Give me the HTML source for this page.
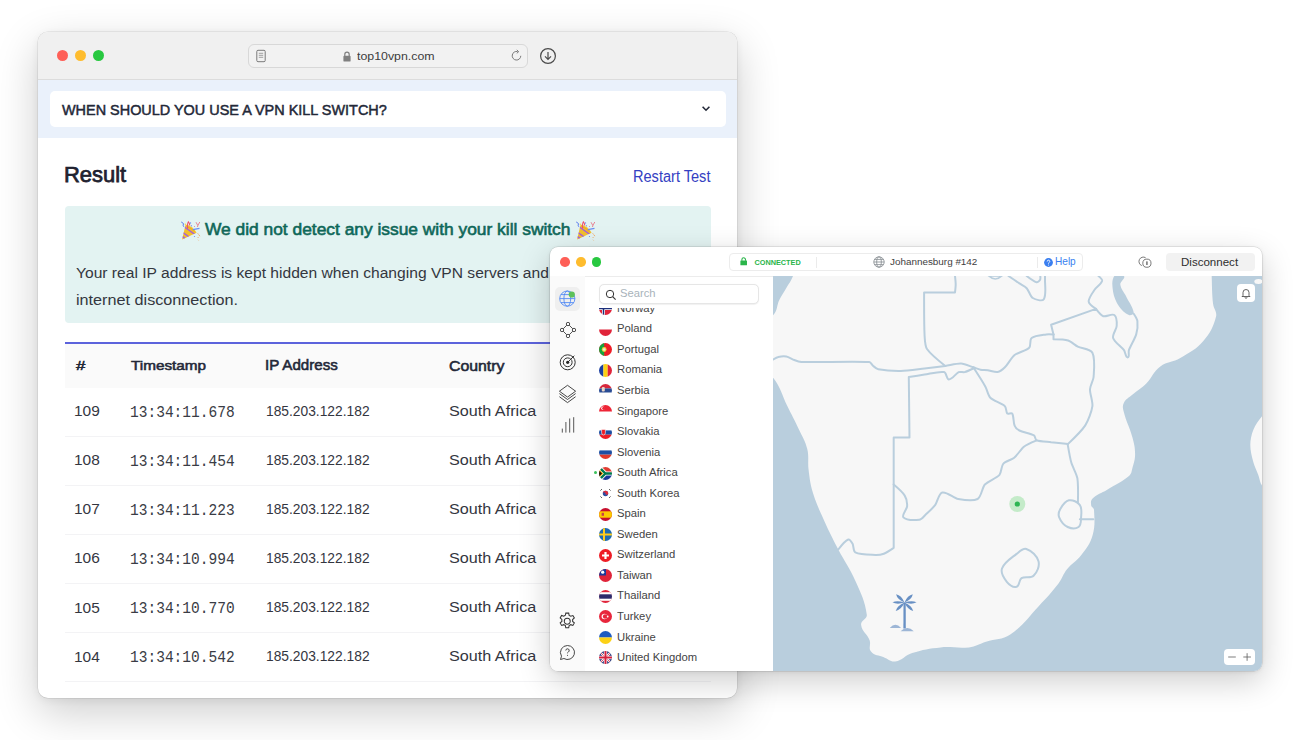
<!DOCTYPE html>
<html><head><meta charset="utf-8">
<style>
*{margin:0;padding:0;box-sizing:border-box}
html,body{width:1300px;height:740px;overflow:hidden;background:#fff;font-family:"Liberation Sans",sans-serif}
.abs{position:absolute}
.t{position:absolute;white-space:nowrap}
.dot{position:absolute;border-radius:50%}
</style></head>
<body>

<div class="abs" style="left:38px;top:32px;width:699.3px;height:666px;border-radius:10px;background:#fff;box-shadow:0 14px 44px rgba(0,0,0,0.20),0 2px 8px rgba(0,0,0,0.06),0 0 0 0.5px rgba(0,0,0,0.12)"></div>
<div class="abs" style="left:38px;top:32px;width:699.3px;height:48px;border-radius:10px 10px 0 0;background:#f0f0f0;border-bottom:1px solid #dcdcdc"></div>
<div class="dot" style="left:56.8px;top:50.3px;width:11.2px;height:11.2px;background:#fe5f57"></div>
<div class="dot" style="left:75.0px;top:50.3px;width:11.2px;height:11.2px;background:#febc2e"></div>
<div class="dot" style="left:93.2px;top:50.3px;width:11.2px;height:11.2px;background:#28c840"></div>
<div class="abs" style="left:248.4px;top:43.9px;width:279.2px;height:24.1px;border:1px solid #d8d8d8;border-radius:6px;background:#f2f2f2"></div>
<svg class="abs" style="left:254px;top:49px" width="14" height="14" viewBox="0 0 14 14"><rect x="2.8" y="1.3" width="8.4" height="11.4" rx="1.2" fill="none" stroke="#7a7a7a" stroke-width="1"/><path d="M4.8 4.3h4.4M4.8 6.3h4.4M4.8 8.3h4.4" stroke="#8a8a8a" stroke-width="0.8"/></svg>
<svg class="abs" style="left:342.5px;top:50.5px" width="8" height="11" viewBox="0 0 8 11"><path d="M1.8 5V3.4a2.2 2.2 0 0 1 4.4 0V5" fill="none" stroke="#808080" stroke-width="1.2"/><rect x="0.4" y="4.8" width="7.2" height="5.8" rx="0.9" fill="#808080"/></svg>
<div class="t" style="left:357.01px;top:50.77px;font:normal 10.96px/10.96px 'Liberation Sans',sans-serif;color:#3d3d3d;transform:scaleX(1.1286);transform-origin:0 0;">top10vpn.com</div>
<svg class="abs" style="left:510px;top:49px" width="13" height="13" viewBox="0 0 13 13"><path d="M10.8 6.8A4.3 4.3 0 1 1 7.6 2.6" fill="none" stroke="#7a7a7a" stroke-width="1"/><path d="M6.8 0.9l1.9 1.8-1.9 1.6" fill="none" stroke="#7a7a7a" stroke-width="1"/></svg>
<svg class="abs" style="left:539.4px;top:46.6px" width="18" height="18" viewBox="0 0 18 18"><circle cx="9" cy="9" r="7.4" fill="none" stroke="#4a4a4a" stroke-width="1.2"/><path d="M9 4.9v7.2M6 9.3L9 12.3l3-3" fill="none" stroke="#4a4a4a" stroke-width="1.2"/></svg>
<div class="abs" style="left:38px;top:80px;width:699.3px;height:57.5px;background:#eaf1fb"></div>
<div class="abs" style="left:49.7px;top:90.5px;width:676.3px;height:36px;background:#fff;border-radius:5px"></div>
<div class="t" style="left:61.54px;top:101.73px;font:normal 15.20px/15.20px 'Liberation Sans',sans-serif;color:#232838;transform:scaleX(0.9501);transform-origin:0 0;-webkit-text-stroke:0.5px #232838;">WHEN SHOULD YOU USE A VPN KILL SWITCH?</div>
<svg class="abs" style="left:700px;top:104.2px" width="12" height="10" viewBox="0 0 12 10"><path d="M2.6 2.8l3.4 3.4 3.4-3.4" fill="none" stroke="#232838" stroke-width="1.6"/></svg>
<div class="t" style="left:64.00px;top:164.90px;font:normal 21.38px/21.38px 'Liberation Sans',sans-serif;color:#1f2230;transform:scaleX(1.0254);transform-origin:0 0;-webkit-text-stroke:0.75px #1f2230;">Result</div>
<div class="t" style="left:633.30px;top:169.09px;font:normal 15.84px/15.84px 'Liberation Sans',sans-serif;color:#3440c2;transform:scaleX(0.9200);transform-origin:0 0;">Restart Test</div>
<div class="abs" style="left:65px;top:206.2px;width:646px;height:117.3px;background:#e3f3f2;border-radius:4px"></div>
<div class="t" style="left:205.43px;top:222.25px;font:normal 16.83px/16.83px 'Liberation Sans',sans-serif;color:#0f6759;transform:scaleX(1.0318);transform-origin:0 0;-webkit-text-stroke:0.6px #0f6759;">We did not detect any issue with your kill switch</div>
<svg class="abs" style="left:176px;top:216px" width="30" height="28" viewBox="0 0 30 28"><defs><clipPath id="pc1"><path d="M6.1,23.5 L9.6,8.6 Q16.5,10 20.6,16.8 Z"/></clipPath></defs><path d="M6.1,23.5 L9.6,8.6 Q16.5,10 20.6,16.8 Z" fill="#f2bf2c"/><g clip-path="url(#pc1)" stroke="#a35de0" stroke-width="1.5"><path d="M4,14.5 L16,23"/><path d="M5,19.5 L13,25.5"/><path d="M7,10 L19,18.5"/></g><path d="M10.5,10.5 Q15,12 18.5,15.5" stroke="#e9a020" stroke-width="1" fill="none" opacity="0.7"/><path d="M5.2,6 Q7,6.5 7.5,8 Q6.5,9 7.8,10.8" stroke="#5b7cf0" stroke-width="1" fill="none"/><path d="M11.6,12.5 Q11.2,7.5 12.4,5.8 Q13.6,7 13.8,9.5" stroke="#f0506a" stroke-width="1.1" fill="none"/><path d="M20,6.2 L21.8,9.5 L23.8,6 M21.8,9.5 L21.5,11" stroke="#e8788a" stroke-width="0.9" fill="none"/><path d="M16.8,13.6 L23.5,12.4" stroke="#6b8ef2" stroke-width="1.2"/><circle cx="14.5" cy="7" r="0.7" fill="#6b8ef2"/><circle cx="15.5" cy="9.8" r="0.6" fill="#5b7cf0"/><circle cx="18.5" cy="10.5" r="0.5" fill="#e8788a"/><circle cx="9.3" cy="8.2" r="0.7" fill="#f6d34a"/><path d="M21.5,17.5 l1.2,0.8 M23,18.8 l0.8,1.4 M21.8,21 l0.6,1 M22,23.8 l0.5,0.6" stroke="#f0a868" stroke-width="0.9"/><circle cx="18.5" cy="20.5" r="0.6" fill="#6b8ef2"/></svg>
<svg class="abs" style="left:570.5px;top:216px" width="30" height="28" viewBox="0 0 30 28"><defs><clipPath id="pc2"><path d="M6.1,23.5 L9.6,8.6 Q16.5,10 20.6,16.8 Z"/></clipPath></defs><path d="M6.1,23.5 L9.6,8.6 Q16.5,10 20.6,16.8 Z" fill="#f2bf2c"/><g clip-path="url(#pc2)" stroke="#a35de0" stroke-width="1.5"><path d="M4,14.5 L16,23"/><path d="M5,19.5 L13,25.5"/><path d="M7,10 L19,18.5"/></g><path d="M10.5,10.5 Q15,12 18.5,15.5" stroke="#e9a020" stroke-width="1" fill="none" opacity="0.7"/><path d="M5.2,6 Q7,6.5 7.5,8 Q6.5,9 7.8,10.8" stroke="#5b7cf0" stroke-width="1" fill="none"/><path d="M11.6,12.5 Q11.2,7.5 12.4,5.8 Q13.6,7 13.8,9.5" stroke="#f0506a" stroke-width="1.1" fill="none"/><path d="M20,6.2 L21.8,9.5 L23.8,6 M21.8,9.5 L21.5,11" stroke="#e8788a" stroke-width="0.9" fill="none"/><path d="M16.8,13.6 L23.5,12.4" stroke="#6b8ef2" stroke-width="1.2"/><circle cx="14.5" cy="7" r="0.7" fill="#6b8ef2"/><circle cx="15.5" cy="9.8" r="0.6" fill="#5b7cf0"/><circle cx="18.5" cy="10.5" r="0.5" fill="#e8788a"/><circle cx="9.3" cy="8.2" r="0.7" fill="#f6d34a"/><path d="M21.5,17.5 l1.2,0.8 M23,18.8 l0.8,1.4 M21.8,21 l0.6,1 M22,23.8 l0.5,0.6" stroke="#f0a868" stroke-width="0.9"/><circle cx="18.5" cy="20.5" r="0.6" fill="#6b8ef2"/></svg>
<div class="t" style="left:76.26px;top:265.69px;font:normal 14.90px/14.90px 'Liberation Sans',sans-serif;color:#34373f;transform:scaleX(1.0482);transform-origin:0 0;">Your real IP address is kept hidden when changing VPN servers and during an</div>
<div class="t" style="left:75.51px;top:292.79px;font:normal 14.90px/14.90px 'Liberation Sans',sans-serif;color:#34373f;transform:scaleX(1.0878);transform-origin:0 0;">internet disconnection.</div>
<div class="abs" style="left:65px;top:342px;width:646px;height:2px;background:#5c63dc"></div>
<div class="abs" style="left:65px;top:344px;width:646px;height:43.7px;background:#fafafa"></div>
<div class="t" style="left:76.33px;top:359.71px;font:normal 12.87px/12.87px 'Liberation Sans',sans-serif;color:#232838;transform:scaleX(1.3073);transform-origin:0 0;-webkit-text-stroke:0.55px #232838;">#</div>
<div class="t" style="left:130.56px;top:359.15px;font:normal 13.52px/13.52px 'Liberation Sans',sans-serif;color:#232838;transform:scaleX(1.1317);transform-origin:0 0;-webkit-text-stroke:0.55px #232838;">Timestamp</div>
<div class="t" style="left:265.31px;top:359.20px;font:normal 13.93px/13.93px 'Liberation Sans',sans-serif;color:#232838;transform:scaleX(1.0852);transform-origin:0 0;-webkit-text-stroke:0.55px #232838;">IP Address</div>
<div class="t" style="left:449.49px;top:358.87px;font:normal 14.33px/14.33px 'Liberation Sans',sans-serif;color:#232838;transform:scaleX(1.1053);transform-origin:0 0;-webkit-text-stroke:0.55px #232838;">Country</div>
<div class="abs" style="left:65px;top:435.8px;width:646px;height:1px;background:#f3f3f5"></div>
<div class="t" style="left:74.32px;top:403.42px;font:normal 15.33px/15.33px 'Liberation Sans',sans-serif;color:#34363f;transform:scaleX(1.0091);transform-origin:0 0;">109</div>
<div class="t" style="left:130.35px;top:404.92px;font:normal 16.29px/16.29px 'Liberation Mono',monospace;color:#3a3c45;transform:scaleX(0.8924);transform-origin:0 0;">13:34:11.678</div>
<div class="t" style="left:266.35px;top:403.06px;font:normal 15.04px/15.04px 'Liberation Sans',sans-serif;color:#34363f;transform:scaleX(0.9178);transform-origin:0 0;">185.203.122.182</div>
<div class="t" style="left:449.27px;top:403.17px;font:normal 15.03px/15.03px 'Liberation Sans',sans-serif;color:#34363f;transform:scaleX(1.0773);transform-origin:0 0;">South Africa</div>
<div class="abs" style="left:65px;top:484.8px;width:646px;height:1px;background:#f3f3f5"></div>
<div class="t" style="left:74.32px;top:452.44px;font:normal 15.33px/15.33px 'Liberation Sans',sans-serif;color:#34363f;transform:scaleX(1.0091);transform-origin:0 0;">108</div>
<div class="t" style="left:130.35px;top:453.94px;font:normal 16.29px/16.29px 'Liberation Mono',monospace;color:#3a3c45;transform:scaleX(0.8924);transform-origin:0 0;">13:34:11.454</div>
<div class="t" style="left:266.35px;top:452.08px;font:normal 15.04px/15.04px 'Liberation Sans',sans-serif;color:#34363f;transform:scaleX(0.9178);transform-origin:0 0;">185.203.122.182</div>
<div class="t" style="left:449.27px;top:452.19px;font:normal 15.03px/15.03px 'Liberation Sans',sans-serif;color:#34363f;transform:scaleX(1.0773);transform-origin:0 0;">South Africa</div>
<div class="abs" style="left:65px;top:533.8px;width:646px;height:1px;background:#f3f3f5"></div>
<div class="t" style="left:74.32px;top:501.46px;font:normal 15.33px/15.33px 'Liberation Sans',sans-serif;color:#34363f;transform:scaleX(1.0091);transform-origin:0 0;">107</div>
<div class="t" style="left:130.35px;top:502.96px;font:normal 16.29px/16.29px 'Liberation Mono',monospace;color:#3a3c45;transform:scaleX(0.8924);transform-origin:0 0;">13:34:11.223</div>
<div class="t" style="left:266.35px;top:501.10px;font:normal 15.04px/15.04px 'Liberation Sans',sans-serif;color:#34363f;transform:scaleX(0.9178);transform-origin:0 0;">185.203.122.182</div>
<div class="t" style="left:449.27px;top:501.21px;font:normal 15.03px/15.03px 'Liberation Sans',sans-serif;color:#34363f;transform:scaleX(1.0773);transform-origin:0 0;">South Africa</div>
<div class="abs" style="left:65px;top:582.9px;width:646px;height:1px;background:#f3f3f5"></div>
<div class="t" style="left:74.32px;top:550.48px;font:normal 15.33px/15.33px 'Liberation Sans',sans-serif;color:#34363f;transform:scaleX(1.0091);transform-origin:0 0;">106</div>
<div class="t" style="left:130.35px;top:551.98px;font:normal 16.29px/16.29px 'Liberation Mono',monospace;color:#3a3c45;transform:scaleX(0.8924);transform-origin:0 0;">13:34:10.994</div>
<div class="t" style="left:266.35px;top:550.12px;font:normal 15.04px/15.04px 'Liberation Sans',sans-serif;color:#34363f;transform:scaleX(0.9178);transform-origin:0 0;">185.203.122.182</div>
<div class="t" style="left:449.27px;top:550.23px;font:normal 15.03px/15.03px 'Liberation Sans',sans-serif;color:#34363f;transform:scaleX(1.0773);transform-origin:0 0;">South Africa</div>
<div class="abs" style="left:65px;top:631.9px;width:646px;height:1px;background:#f3f3f5"></div>
<div class="t" style="left:74.32px;top:599.50px;font:normal 15.33px/15.33px 'Liberation Sans',sans-serif;color:#34363f;transform:scaleX(1.0091);transform-origin:0 0;">105</div>
<div class="t" style="left:130.35px;top:601.00px;font:normal 16.29px/16.29px 'Liberation Mono',monospace;color:#3a3c45;transform:scaleX(0.8924);transform-origin:0 0;">13:34:10.770</div>
<div class="t" style="left:266.35px;top:599.14px;font:normal 15.04px/15.04px 'Liberation Sans',sans-serif;color:#34363f;transform:scaleX(0.9178);transform-origin:0 0;">185.203.122.182</div>
<div class="t" style="left:449.27px;top:599.25px;font:normal 15.03px/15.03px 'Liberation Sans',sans-serif;color:#34363f;transform:scaleX(1.0773);transform-origin:0 0;">South Africa</div>
<div class="abs" style="left:65px;top:680.9px;width:646px;height:1px;background:#f3f3f5"></div>
<div class="t" style="left:74.32px;top:648.52px;font:normal 15.33px/15.33px 'Liberation Sans',sans-serif;color:#34363f;transform:scaleX(1.0091);transform-origin:0 0;">104</div>
<div class="t" style="left:130.35px;top:650.02px;font:normal 16.29px/16.29px 'Liberation Mono',monospace;color:#3a3c45;transform:scaleX(0.8924);transform-origin:0 0;">13:34:10.542</div>
<div class="t" style="left:266.35px;top:648.16px;font:normal 15.04px/15.04px 'Liberation Sans',sans-serif;color:#34363f;transform:scaleX(0.9178);transform-origin:0 0;">185.203.122.182</div>
<div class="t" style="left:449.27px;top:648.27px;font:normal 15.03px/15.03px 'Liberation Sans',sans-serif;color:#34363f;transform:scaleX(1.0773);transform-origin:0 0;">South Africa</div>
<div class="abs" style="left:550px;top:247px;width:712px;height:424px;border-radius:8px;background:#fff;box-shadow:0 10px 32px rgba(0,0,0,0.20),0 1px 4px rgba(0,0,0,0.08),0 0 0 0.5px rgba(0,0,0,0.14)"></div>
<div class="abs" style="left:550px;top:275.5px;width:712px;height:1px;background:#ececec"></div>
<div class="dot" style="left:560.45px;top:257.25px;width:9.5px;height:9.5px;background:#fe5f57"></div>
<div class="dot" style="left:576.25px;top:257.25px;width:9.5px;height:9.5px;background:#febc2e"></div>
<div class="dot" style="left:591.85px;top:257.25px;width:9.5px;height:9.5px;background:#28c840"></div>
<div class="abs" style="left:728.5px;top:253.2px;width:354.8px;height:17.5px;border:1px solid #ececec;border-radius:4px;background:#fff"></div>
<svg class="abs" style="left:740.3px;top:257.3px" width="7.4" height="8.4" viewBox="0 0 7.4 8.4"><path d="M1.9 3.8V2.6a1.8 1.8 0 0 1 3.6 0v1.2" fill="none" stroke="#2ab54a" stroke-width="1.1"/><rect x="0.4" y="3.6" width="6.6" height="4.6" rx="0.5" fill="#2ab54a"/></svg>
<div class="t" style="left:754.50px;top:258.71px;font:bold 7.31px/7.31px 'Liberation Sans',sans-serif;color:#2ab54a;">CONNECTED</div>
<div class="abs" style="left:815.5px;top:257px;width:1px;height:10.5px;background:#ebebeb"></div>
<svg class="abs" style="left:873.3px;top:255.9px" width="12" height="12" viewBox="0 0 12 12"><g fill="none" stroke="#8a9095" stroke-width="0.85"><circle cx="6" cy="6" r="5.2"/><ellipse cx="6" cy="6" rx="2.3" ry="5.2"/><path d="M0.8 6h10.4M1.6 3.4h8.8M1.6 8.6h8.8"/></g></svg>
<div class="t" style="left:890.24px;top:256.82px;font:normal 9.66px/9.66px 'Liberation Sans',sans-serif;color:#3e3e3e;transform:scaleX(1.0233);transform-origin:0 0;">Johannesburg #142</div>
<div class="abs" style="left:1037px;top:257px;width:1px;height:10.5px;background:#ebebeb"></div>
<svg class="abs" style="left:1044px;top:257.5px" width="9" height="9" viewBox="0 0 9 9"><circle cx="4.5" cy="4.5" r="4.4" fill="#3a7ff0"/><path d="M3.2 3.5a1.3 1.3 0 1 1 1.9 1.1c-.5.3-.6.5-.6 1" fill="none" stroke="#fff" stroke-width="0.9"/><circle cx="4.5" cy="6.9" r="0.5" fill="#fff"/></svg>
<div class="t" style="left:1054.67px;top:256.72px;font:normal 10.48px/10.48px 'Liberation Sans',sans-serif;color:#3a7ff0;transform:scaleX(0.9623);transform-origin:0 0;">Help</div>
<svg class="abs" style="left:1136px;top:254px" width="18" height="16" viewBox="0 0 18 16"><g fill="none" stroke="#6a6a6a" stroke-width="0.9"><path d="M9.6,3.7 A4.4,4.4 0 1 0 5.8,11.6"/><circle cx="10.9" cy="9.2" r="4.1"/></g><rect x="10" y="7.3" width="1.8" height="3.8" rx="0.6" fill="#888"/></svg>
<div class="abs" style="left:1165.5px;top:253.3px;width:89.5px;height:17.7px;border-radius:4px;background:#f2f2f2"></div>
<div class="t" style="left:1181.35px;top:256.47px;font:normal 11.72px/11.72px 'Liberation Sans',sans-serif;color:#2e2e2e;transform:scaleX(0.9850);transform-origin:0 0;">Disconnect</div>
<div class="abs" style="left:550px;top:276px;width:34.6px;height:395px;background:#fafafa;border-bottom-left-radius:8px"></div>
<div class="abs" style="left:555.4px;top:286.5px;width:24.4px;height:24.9px;border-radius:5px;background:#efefef"></div>
<svg class="abs" style="left:558px;top:289px" width="20" height="19" viewBox="0 0 20 19"><g fill="none" stroke="#4a85f6" stroke-width="0.85"><circle cx="9.3" cy="9.6" r="7.6"/><ellipse cx="9.3" cy="9.6" rx="3.4" ry="7.6"/><path d="M1.7 9.6h15.2M2.9 5.6h12.8M2.9 13.6h12.8"/></g><circle cx="13.8" cy="5.5" r="3.1" fill="#5cc15a"/></svg>
<svg class="abs" style="left:559.5px;top:322.2px" width="16" height="16" viewBox="0 0 16 16"><g fill="none" stroke="#333" stroke-width="0.85"><circle cx="8" cy="2" r="1.7"/><circle cx="2" cy="8" r="1.7"/><circle cx="14" cy="8" r="1.7"/><circle cx="8" cy="14" r="1.7"/><path d="M6.8 3.2L3.2 6.8M9.2 3.2l3.6 3.6M3.2 9.2l3.6 3.6M12.8 9.2l-3.6 3.6"/></g></svg>
<svg class="abs" style="left:558.5px;top:352.5px" width="18" height="18" viewBox="0 0 18 18"><g fill="none" stroke="#333" stroke-width="1"><circle cx="8.7" cy="9.3" r="7.5"/><circle cx="8.7" cy="9.3" r="4.4"/><path d="M8.7 9.3L15.3 2.7"/></g><circle cx="8.7" cy="9.3" r="1.6" fill="#222"/></svg>
<svg class="abs" style="left:558px;top:384px" width="19" height="20" viewBox="0 0 19 20"><g fill="none" stroke="#333" stroke-width="0.9" stroke-linejoin="round"><path d="M9.5 1.3L17.6 7.2 9.5 13.1 1.4 7.2Z"/><path d="M1.4 9.6l8.1 5.9 8.1-5.9M1.4 12.7l8.1 5.9 8.1-5.9"/></g></svg>
<svg class="abs" style="left:559.5px;top:417px" width="16" height="17" viewBox="0 0 16 17"><g stroke="#444" stroke-width="0.9"><path d="M2.3 15.6V11.6M5.9 15.6V5M9.7 15.6V1.5M13.7 15.6V0.2"/></g></svg>
<svg class="abs" style="left:557.3px;top:610.8px" width="20.5" height="20.5" viewBox="0 0 24 24"><path fill="none" stroke="#333" stroke-width="1.2" d="M12 8.5a3.5 3.5 0 1 0 0 7 3.5 3.5 0 0 0 0-7zM10.3 2.5h3.4l.5 2.6 1.9 1.1 2.5-.9 1.7 2.9-2 1.8v2.2l2 1.8-1.7 2.9-2.5-.9-1.9 1.1-.5 2.6h-3.4l-.5-2.6-1.9-1.1-2.5.9-1.7-2.9 2-1.8V9.9l-2-1.8 1.7-2.9 2.5.9 1.9-1.1z"/></svg>
<svg class="abs" style="left:558.5px;top:644px" width="17" height="17" viewBox="0 0 17 17"><path fill="none" stroke="#333" stroke-width="0.9" d="M8.5 1.5a7 7 0 1 1-3.6 13L1.5 15.5l1-3.3A7 7 0 0 1 8.5 1.5z"/><path d="M6.8 6.5a1.7 1.7 0 1 1 2.5 1.5c-.6.3-.8.7-.8 1.3" fill="none" stroke="#333" stroke-width="0.9"/><circle cx="8.5" cy="11.3" r="0.55" fill="#333"/></svg>
<svg class="abs" style="left:598.8px;top:302.26px" width="13" height="13" viewBox="0 0 13 13"><defs><clipPath id="c0"><circle cx="6.5" cy="6.5" r="6.5"/></clipPath></defs><g clip-path="url(#c0)"><rect width="13" height="13" fill="#e0243a"/><path d="M0 6.5h13M4.5 0v13" stroke="#fff" stroke-width="3"/><path d="M0 6.5h13M4.5 0v13" stroke="#1c2f7a" stroke-width="1.5"/></g></svg>
<div class="t" style="left:616.78px;top:302.87px;font:normal 10.62px/10.62px 'Liberation Sans',sans-serif;color:#444;transform:scaleX(1.0619);transform-origin:0 0;">Norway</div>
<svg class="abs" style="left:598.8px;top:322.80px" width="13" height="13" viewBox="0 0 13 13"><defs><clipPath id="c1"><circle cx="6.5" cy="6.5" r="6.5"/></clipPath></defs><g clip-path="url(#c1)"><rect width="13" height="13" fill="#fff"/><rect y="6.5" width="13" height="6.5" fill="#e0243a"/></g></svg>
<div class="t" style="left:616.78px;top:323.41px;font:normal 10.62px/10.62px 'Liberation Sans',sans-serif;color:#444;transform:scaleX(1.0619);transform-origin:0 0;">Poland</div>
<svg class="abs" style="left:598.8px;top:343.34px" width="13" height="13" viewBox="0 0 13 13"><defs><clipPath id="c2"><circle cx="6.5" cy="6.5" r="6.5"/></clipPath></defs><g clip-path="url(#c2)"><rect width="13" height="13" fill="#ee1c25"/><rect width="5.2" height="13" fill="#16a43c"/><circle cx="5.2" cy="6.5" r="2.4" fill="#f5d23a"/><circle cx="5.2" cy="6.5" r="1.3" fill="#e9e9ee"/></g></svg>
<div class="t" style="left:616.78px;top:343.95px;font:normal 10.62px/10.62px 'Liberation Sans',sans-serif;color:#444;transform:scaleX(1.0619);transform-origin:0 0;">Portugal</div>
<svg class="abs" style="left:598.8px;top:363.88px" width="13" height="13" viewBox="0 0 13 13"><defs><clipPath id="c3"><circle cx="6.5" cy="6.5" r="6.5"/></clipPath></defs><g clip-path="url(#c3)"><rect width="4.4" height="13" fill="#1b3fa1"/><rect x="4.4" width="4.3" height="13" fill="#fcd116"/><rect x="8.7" width="4.3" height="13" fill="#e0243a"/></g></svg>
<div class="t" style="left:616.78px;top:364.49px;font:normal 10.62px/10.62px 'Liberation Sans',sans-serif;color:#444;transform:scaleX(1.0619);transform-origin:0 0;">Romania</div>
<svg class="abs" style="left:598.8px;top:384.42px" width="13" height="13" viewBox="0 0 13 13"><defs><clipPath id="c4"><circle cx="6.5" cy="6.5" r="6.5"/></clipPath></defs><g clip-path="url(#c4)"><rect width="13" height="4.4" fill="#d8283d"/><rect y="4.4" width="13" height="4.3" fill="#2a4c94"/><rect y="8.7" width="13" height="4.3" fill="#ffffff"/><rect x="2.8" y="3" width="3" height="4.5" rx="1" fill="#e9d6c8"/></g></svg>
<div class="t" style="left:617.19px;top:385.03px;font:normal 10.62px/10.62px 'Liberation Sans',sans-serif;color:#444;transform:scaleX(1.0619);transform-origin:0 0;">Serbia</div>
<svg class="abs" style="left:598.8px;top:404.96px" width="13" height="13" viewBox="0 0 13 13"><defs><clipPath id="c5"><circle cx="6.5" cy="6.5" r="6.5"/></clipPath></defs><g clip-path="url(#c5)"><rect width="13" height="13" fill="#fff"/><rect width="13" height="6.5" fill="#ee2536"/><circle cx="4" cy="3.3" r="1.8" fill="#fff"/><circle cx="4.8" cy="3.3" r="1.6" fill="#ee2536"/></g></svg>
<div class="t" style="left:617.19px;top:405.57px;font:normal 10.62px/10.62px 'Liberation Sans',sans-serif;color:#444;transform:scaleX(1.0619);transform-origin:0 0;">Singapore</div>
<svg class="abs" style="left:598.8px;top:425.50px" width="13" height="13" viewBox="0 0 13 13"><defs><clipPath id="c6"><circle cx="6.5" cy="6.5" r="6.5"/></clipPath></defs><g clip-path="url(#c6)"><rect width="13" height="4.4" fill="#ffffff"/><rect y="4.4" width="13" height="4.3" fill="#1d4fa3"/><rect y="8.7" width="13" height="4.3" fill="#ee1c25"/><path d="M2.6 3.4h3.8v3.4a1.9 2.2 0 0 1-3.8 0z" fill="#ee1c25" stroke="#fff" stroke-width="0.6"/></g></svg>
<div class="t" style="left:617.19px;top:426.11px;font:normal 10.62px/10.62px 'Liberation Sans',sans-serif;color:#444;transform:scaleX(1.0619);transform-origin:0 0;">Slovakia</div>
<svg class="abs" style="left:598.8px;top:446.04px" width="13" height="13" viewBox="0 0 13 13"><defs><clipPath id="c7"><circle cx="6.5" cy="6.5" r="6.5"/></clipPath></defs><g clip-path="url(#c7)"><rect width="13" height="4.4" fill="#ffffff"/><rect y="4.4" width="13" height="4.3" fill="#1d4fa3"/><rect y="8.7" width="13" height="4.3" fill="#e0392b"/></g></svg>
<div class="t" style="left:617.19px;top:446.65px;font:normal 10.62px/10.62px 'Liberation Sans',sans-serif;color:#444;transform:scaleX(1.0619);transform-origin:0 0;">Slovenia</div>
<svg class="abs" style="left:598.8px;top:466.58px" width="13" height="13" viewBox="0 0 13 13"><defs><clipPath id="c8"><circle cx="6.5" cy="6.5" r="6.5"/></clipPath></defs><g clip-path="url(#c8)"><rect width="13" height="6.5" fill="#e03c31"/><rect y="6.5" width="13" height="6.5" fill="#1a3b9b"/><path d="M0 0L6.5 6.5H13M0 13L6.5 6.5" fill="none" stroke="#fff" stroke-width="4"/><path d="M0 0L6.5 6.5H13M0 13L6.5 6.5" fill="none" stroke="#007a4d" stroke-width="2.4"/><path d="M0 2.2L4.3 6.5 0 10.8z" fill="#ffb612"/><path d="M0 3.4L3.1 6.5 0 9.6z" fill="#111"/></g></svg>
<div class="t" style="left:617.19px;top:467.19px;font:normal 10.62px/10.62px 'Liberation Sans',sans-serif;color:#444;transform:scaleX(1.0619);transform-origin:0 0;">South Africa</div>
<div class="abs" style="left:594px;top:471.1px;width:3px;height:3px;border-radius:50%;background:#3cc15a"></div>
<svg class="abs" style="left:598.8px;top:487.12px" width="13" height="13" viewBox="0 0 13 13"><defs><clipPath id="c9"><circle cx="6.5" cy="6.5" r="6.5"/></clipPath></defs><g clip-path="url(#c9)"><rect width="13" height="13" fill="#ffffff"/><circle cx="6.5" cy="6.5" r="2.7" fill="#2a4fa3"/><path d="M3.8 6.5a2.7 2.7 0 0 1 5.4 0 1.35 1.35 0 0 1-2.7 0 1.35 1.35 0 0 0-2.7 0z" fill="#dd2b3b"/><path d="M1.5 3.5l1.3-1.3M10.2 2.2l1.3 1.3M1.5 9.5l1.3 1.3M11.5 9.5l-1.3 1.3" stroke="#222" stroke-width="0.9"/></g></svg>
<div class="t" style="left:617.19px;top:487.73px;font:normal 10.62px/10.62px 'Liberation Sans',sans-serif;color:#444;transform:scaleX(1.0619);transform-origin:0 0;">South Korea</div>
<svg class="abs" style="left:598.8px;top:507.66px" width="13" height="13" viewBox="0 0 13 13"><defs><clipPath id="c10"><circle cx="6.5" cy="6.5" r="6.5"/></clipPath></defs><g clip-path="url(#c10)"><rect width="13" height="13" fill="#c8102e"/><rect y="3.3" width="13" height="6.4" fill="#fcc900"/><rect x="2.6" y="4.8" width="2.4" height="3" fill="#c8414a"/></g></svg>
<div class="t" style="left:617.19px;top:508.27px;font:normal 10.62px/10.62px 'Liberation Sans',sans-serif;color:#444;transform:scaleX(1.0619);transform-origin:0 0;">Spain</div>
<svg class="abs" style="left:598.8px;top:528.20px" width="13" height="13" viewBox="0 0 13 13"><defs><clipPath id="c11"><circle cx="6.5" cy="6.5" r="6.5"/></clipPath></defs><g clip-path="url(#c11)"><rect width="13" height="13" fill="#1d6bb0"/><path d="M0 6.5h13M5 0v13" stroke="#fdcb1b" stroke-width="2"/></g></svg>
<div class="t" style="left:617.19px;top:528.81px;font:normal 10.62px/10.62px 'Liberation Sans',sans-serif;color:#444;transform:scaleX(1.0619);transform-origin:0 0;">Sweden</div>
<svg class="abs" style="left:598.8px;top:548.74px" width="13" height="13" viewBox="0 0 13 13"><defs><clipPath id="c12"><circle cx="6.5" cy="6.5" r="6.5"/></clipPath></defs><g clip-path="url(#c12)"><rect width="13" height="13" fill="#ee1c25"/><path d="M6.5 3v7M3 6.5h7" stroke="#fff" stroke-width="2.2"/></g></svg>
<div class="t" style="left:617.19px;top:549.35px;font:normal 10.62px/10.62px 'Liberation Sans',sans-serif;color:#444;transform:scaleX(1.0619);transform-origin:0 0;">Switzerland</div>
<svg class="abs" style="left:598.8px;top:569.28px" width="13" height="13" viewBox="0 0 13 13"><defs><clipPath id="c13"><circle cx="6.5" cy="6.5" r="6.5"/></clipPath></defs><g clip-path="url(#c13)"><rect width="13" height="13" fill="#e0243a"/><rect width="7" height="6.5" fill="#1a3a9a"/><circle cx="3.7" cy="3.2" r="1.6" fill="#fff"/></g></svg>
<div class="t" style="left:617.45px;top:569.89px;font:normal 10.62px/10.62px 'Liberation Sans',sans-serif;color:#444;transform:scaleX(1.0619);transform-origin:0 0;">Taiwan</div>
<svg class="abs" style="left:598.8px;top:589.82px" width="13" height="13" viewBox="0 0 13 13"><defs><clipPath id="c14"><circle cx="6.5" cy="6.5" r="6.5"/></clipPath></defs><g clip-path="url(#c14)"><rect width="13" height="13" fill="#e0243a"/><rect y="2.2" width="13" height="8.6" fill="#ffffff"/><rect y="4.3" width="13" height="4.4" fill="#2d2a6b"/></g></svg>
<div class="t" style="left:617.45px;top:590.43px;font:normal 10.62px/10.62px 'Liberation Sans',sans-serif;color:#444;transform:scaleX(1.0619);transform-origin:0 0;">Thailand</div>
<svg class="abs" style="left:598.8px;top:610.36px" width="13" height="13" viewBox="0 0 13 13"><defs><clipPath id="c15"><circle cx="6.5" cy="6.5" r="6.5"/></clipPath></defs><g clip-path="url(#c15)"><rect width="13" height="13" fill="#e8263c"/><circle cx="5.4" cy="6.5" r="2.8" fill="#fff"/><circle cx="6.1" cy="6.5" r="2.25" fill="#e8263c"/><circle cx="8.7" cy="6.5" r="0.9" fill="#fff"/></g></svg>
<div class="t" style="left:617.45px;top:610.97px;font:normal 10.62px/10.62px 'Liberation Sans',sans-serif;color:#444;transform:scaleX(1.0619);transform-origin:0 0;">Turkey</div>
<svg class="abs" style="left:598.8px;top:630.90px" width="13" height="13" viewBox="0 0 13 13"><defs><clipPath id="c16"><circle cx="6.5" cy="6.5" r="6.5"/></clipPath></defs><g clip-path="url(#c16)"><rect width="13" height="6.5" fill="#1d5bc2"/><rect y="6.5" width="13" height="6.5" fill="#fcd116"/></g></svg>
<div class="t" style="left:616.83px;top:631.51px;font:normal 10.62px/10.62px 'Liberation Sans',sans-serif;color:#444;transform:scaleX(1.0619);transform-origin:0 0;">Ukraine</div>
<svg class="abs" style="left:598.8px;top:651.44px" width="13" height="13" viewBox="0 0 13 13"><defs><clipPath id="c17"><circle cx="6.5" cy="6.5" r="6.5"/></clipPath></defs><g clip-path="url(#c17)"><rect width="13" height="13" fill="#1f2f74"/><path d="M0 0L13 13M13 0L0 13" stroke="#fff" stroke-width="2.2"/><path d="M0 0L13 13M13 0L0 13" stroke="#d4213d" stroke-width="0.8"/><path d="M6.5 0v13M0 6.5h13" stroke="#fff" stroke-width="3.4"/><path d="M6.5 0v13M0 6.5h13" stroke="#d4213d" stroke-width="2"/></g></svg>
<div class="t" style="left:616.83px;top:652.05px;font:normal 10.62px/10.62px 'Liberation Sans',sans-serif;color:#444;transform:scaleX(1.0619);transform-origin:0 0;">United Kingdom</div>
<div class="abs" style="left:584.6px;top:276.5px;width:188px;height:31.3px;background:#fff"></div>
<div class="abs" style="left:598.8px;top:284.4px;width:160px;height:19.7px;border:1px solid #e6e6e6;border-radius:5px;background:#fff;box-shadow:0 0.5px 1px rgba(0,0,0,0.06)"></div>
<svg class="abs" style="left:604.5px;top:288.5px" width="12" height="12" viewBox="0 0 12 12"><circle cx="5" cy="5" r="3.7" fill="none" stroke="#333" stroke-width="1"/><path d="M7.7 7.7L10.6 10.6" stroke="#333" stroke-width="1.1"/></svg>
<div class="t" style="left:620.20px;top:288.11px;font:normal 11.45px/11.45px 'Liberation Sans',sans-serif;color:#a8b3ba;transform:scaleX(0.9798);transform-origin:0 0;">Search</div>
<div class="abs" style="left:772.7px;top:276px;width:489.3px;height:395px;overflow:hidden;border-bottom-right-radius:8px"><svg class="abs" style="left:0;top:0" width="489.3" height="395" viewBox="772.7 276 489.3 395"><rect x="772.7" y="276" width="489.3" height="395" fill="#b9cedd"/><path d="M792.7,276.0 C790.8,281.1 788.7,283.3 786.0,288.0 C783.3,292.8 781.4,295.0 779.0,300.0 C776.2,305.8 777.4,310.3 773.0,315.0 C770.8,317.3 765.4,311.9 765.0,315.0 C761.9,339.7 761.9,353.3 765.0,378.0 C765.4,381.1 771.0,375.5 773.0,378.0 C780.7,387.7 781.5,394.9 787.0,406.0 C791.5,415.1 794.1,419.8 798.4,429.0 C802.0,436.7 804.9,440.5 806.9,448.8 C808.9,457.0 807.2,461.7 808.3,470.0 C809.5,479.1 809.9,484.0 812.6,492.7 C816.2,504.2 819.1,510.0 824.0,521.0 C829.1,532.5 832.2,538.3 838.0,549.5 C844.5,562.0 849.4,567.8 855.0,580.7 C860.7,593.7 864.6,600.6 866.5,614.7 C867.1,619.2 860.3,620.2 860.8,624.7 C861.6,631.7 866.9,633.7 869.3,640.3 C870.9,644.5 867.8,648.1 870.7,651.6 C874.3,655.9 878.4,655.2 883.5,657.3 C888.0,659.1 890.1,662.2 894.9,661.5 C902.3,660.4 904.7,655.2 911.9,653.0 C922.8,649.6 928.9,648.5 940.3,647.4 C951.5,646.3 957.5,648.8 968.6,647.4 C975.7,646.5 978.9,643.8 985.7,641.7 C995.3,638.7 1001.7,640.1 1010.0,634.5 C1023.2,625.6 1027.5,617.7 1038.4,606.2 C1046.6,597.5 1050.9,593.0 1058.2,583.5 C1062.2,578.3 1062.6,574.4 1066.7,569.3 C1071.7,563.0 1076.2,561.4 1081.0,555.0 C1086.4,547.8 1089.9,543.9 1092.3,535.2 C1095.0,525.5 1094.2,519.8 1093.7,509.7 C1093.6,507.7 1091.1,507.5 1090.9,505.5 C1090.5,502.7 1090.3,500.4 1092.3,498.4 C1096.9,493.8 1100.9,493.3 1106.5,489.9 C1115.5,484.4 1120.9,482.5 1129.0,475.7 C1131.3,473.7 1131.2,471.5 1132.0,468.6 C1133.5,462.9 1134.8,459.9 1134.8,454.0 C1134.8,447.2 1133.8,443.6 1132.0,437.0 C1129.3,426.9 1126.0,422.1 1123.5,412.0 C1122.6,408.5 1121.9,406.2 1123.5,403.0 C1125.6,398.8 1128.5,397.9 1132.0,394.8 C1137.4,390.1 1141.0,388.6 1146.0,383.5 C1152.1,377.3 1153.0,371.7 1160.0,366.5 C1166.9,361.3 1172.6,362.4 1180.0,358.0 C1189.7,352.2 1195.6,349.6 1203.0,341.0 C1210.1,332.8 1212.9,327.3 1215.7,316.8 C1217.0,311.8 1213.4,309.2 1212.8,304.0 C1211.6,293.4 1211.8,287.7 1211.4,277.0 C1211.3,274.2 1214.2,270.0 1211.4,270.0 C1045.6,267.2 958.5,267.6 792.7,270.0 C790.3,270.0 793.5,273.8 792.7,276.0Z" fill="#f7f7f7"/><path d="M1270.0,410.0 C1270.0,410.0 1264.1,413.5 1262.0,416.0 C1258.4,420.2 1255.1,424.9 1253.0,430.0 C1251.1,434.7 1250.0,440.0 1250.0,445.0 C1250.0,450.7 1251.5,456.5 1253.0,462.0 C1254.2,466.4 1256.4,470.7 1258.0,475.0 C1259.4,478.6 1259.6,483.0 1262.0,486.0 C1263.8,488.3 1270.0,490.0 1270.0,490.0Z" fill="#f7f7f7"/><ellipse cx="1258" cy="281.5" rx="4" ry="2.5" fill="#f7f7f7"/><path d="M1114.0,276.0 C1111.0,280.3 1112.0,286.7 1112.8,291.9 C1113.6,297.0 1115.9,302.2 1118.8,306.5 C1121.2,310.0 1124.6,313.3 1128.6,315.0 C1130.2,315.7 1133.6,314.4 1133.4,312.6 C1132.6,306.9 1128.5,301.9 1126.0,296.7 C1124.1,292.7 1120.5,289.0 1120.0,284.6 C1119.7,281.5 1125.5,278.5 1123.7,276.0 C1121.9,273.4 1115.8,273.4 1114.0,276.0Z" fill="#b9cedd"/><path d="M988.5,276 Q995,282 1001.5,276Z" fill="#f7f7f7" stroke="#b9cedd" stroke-width="1.6"/><g fill="none" stroke="#b9cedd" stroke-width="2" stroke-linejoin="round" stroke-linecap="round"><path d="M773.0,359.4 C773.0,359.4 776.6,357.3 778.0,357.0 C780.1,356.5 783.9,356.1 786.0,356.5 C788.3,356.9 791.8,359.2 794.0,360.0 C795.8,360.7 799.1,361.9 801.0,362.0 C818.9,362.5 851.1,361.0 869.0,362.0 C870.5,362.1 871.8,365.1 873.0,366.0 C874.2,367.0 876.4,369.0 878.0,369.3 C883.9,370.4 894.5,371.1 900.5,371.0 C906.8,370.9 918.0,369.2 924.3,368.5 C929.8,367.9 939.5,366.7 945.0,366.0 C949.2,365.4 956.6,363.4 960.8,363.6 C964.2,363.8 969.8,366.3 973.0,367.3 C974.9,367.9 978.2,369.3 980.2,369.7 C982.1,370.1 985.6,369.9 987.5,370.2 C990.1,370.6 994.7,372.4 997.3,372.0 C999.6,371.6 1003.0,368.9 1004.6,367.3 C1007.5,364.4 1011.1,357.6 1014.3,355.0 C1017.7,352.3 1025.9,350.8 1028.9,347.8 C1030.8,345.9 1029.2,339.6 1031.3,338.0 C1034.4,335.5 1042.0,335.0 1045.9,334.4 C1047.8,334.1 1053.2,334.4 1053.2,334.4"/><path d="M954.7,276.0 C954.7,276.0 955.4,282.3 955.4,284.6 C955.4,286.7 954.7,292.4 954.7,292.4 C954.7,292.4 923.8,292.4 923.8,292.4 C923.8,292.4 923.7,324.3 924.3,335.7 C924.5,339.3 924.7,346.1 926.7,349.0 C930.4,354.4 945.0,366.0 945.0,366.0"/><path d="M1053.2,334.4 C1053.2,334.4 1050.8,324.7 1050.8,324.7 C1050.8,324.7 1095.7,308.9 1095.7,308.9 C1095.7,308.9 1100.4,315.3 1103.0,316.2 C1105.8,317.1 1111.6,313.3 1114.0,315.0 C1116.4,316.8 1116.6,323.0 1116.4,326.0 C1116.2,329.3 1111.8,334.8 1112.8,338.0 C1114.0,342.1 1121.1,346.7 1123.7,350.2 C1125.0,351.9 1125.2,357.5 1127.4,357.5 C1129.4,357.5 1127.9,352.0 1128.6,350.2 C1130.2,345.9 1134.6,338.8 1135.9,334.4 C1136.9,331.0 1137.5,324.5 1137.1,321.0 C1136.8,318.9 1133.4,313.8 1133.4,313.8"/><path d="M1095.7,308.9 C1095.7,308.9 1088.6,304.3 1088.4,301.6 C1088.2,298.0 1092.5,292.5 1094.5,289.5 C1096.1,287.0 1101.0,283.9 1101.8,281.0 C1102.2,279.4 1098.2,276.0 1098.2,276.0"/><path d="M1053.2,334.4 C1053.2,334.4 1053.2,339.3 1053.2,339.3 C1053.2,339.3 1064.1,339.4 1067.8,340.5 C1070.7,341.4 1074.8,345.2 1077.5,346.6 C1081.2,348.5 1090.2,349.0 1092.1,352.7 C1095.1,358.4 1093.7,370.6 1093.3,377.0 C1093.1,380.4 1089.8,385.8 1089.7,389.2 C1089.5,393.7 1092.7,401.7 1092.1,406.2 C1091.4,411.6 1087.8,421.0 1084.8,425.6 C1081.2,431.1 1067.8,443.9 1067.8,443.9"/><path d="M973.0,367.3 C973.0,367.3 982.2,381.4 985.1,386.7 C986.7,389.5 987.8,395.5 990.0,397.7 C993.2,400.9 1001.3,403.2 1004.6,406.2 C1006.1,407.6 1005.6,412.1 1007.0,413.5 C1007.9,414.4 1011.2,412.4 1011.9,413.5 C1013.6,416.3 1013.0,422.6 1014.3,425.6 C1015.0,427.3 1017.5,429.7 1019.1,430.5 C1022.7,432.3 1030.2,433.4 1033.7,435.4 C1034.9,436.1 1034.9,439.7 1036.2,440.2 C1039.8,441.6 1046.9,441.7 1050.8,442.2 C1055.3,442.7 1067.8,443.9 1067.8,443.9"/><path d="M973.0,368.5 C973.0,368.5 966.8,371.5 964.4,372.1 C962.9,372.5 959.8,371.4 958.4,372.1 C955.5,373.5 951.8,379.4 948.6,379.4 C946.3,379.4 946.1,372.5 943.8,372.1 C938.7,371.1 929.4,373.9 924.3,374.6 C920.1,375.2 908.5,377.0 908.5,377.0 C908.5,377.0 909.2,437.5 909.2,437.5 C909.2,437.5 893.4,437.5 893.4,437.5 C893.4,437.5 893.4,547.8 893.4,547.8 C893.4,547.8 886.3,552.6 883.5,553.7 C881.4,554.5 877.3,555.1 875.0,555.0 C869.7,554.7 859.8,554.7 855.0,552.3 C852.9,551.3 853.4,545.9 852.3,543.8 C851.5,542.4 849.5,538.9 848.0,539.5 C844.5,540.9 838.0,549.5 838.0,549.5"/><path d="M893.4,484.5 C893.4,484.5 902.2,491.9 904.3,495.4 C905.9,497.9 907.0,503.4 906.8,506.4 C906.6,509.4 901.1,515.1 903.1,517.3 C906.0,520.4 914.8,520.2 919.0,519.8 C921.0,519.6 923.5,516.4 925.0,515.0 C927.7,512.5 932.6,508.1 934.8,505.2 C937.1,502.1 938.3,493.5 942.0,492.5 C946.4,491.3 953.4,498.2 957.9,499.0 C962.9,499.9 972.8,501.4 977.3,499.0 C981.1,497.0 981.7,487.7 984.6,484.5 C987.7,481.1 996.1,478.3 999.2,474.8 C1001.2,472.5 1000.9,466.1 1002.9,463.8 C1005.1,461.3 1011.3,459.8 1013.9,457.7 C1016.9,455.3 1020.6,449.2 1023.6,446.8 C1026.4,444.6 1035.8,440.7 1035.8,440.7"/><path d="M1067.4,444.3 C1067.4,444.3 1069.7,457.9 1071.0,462.6 C1072.2,466.9 1076.4,474.0 1077.1,478.4 C1078.1,484.8 1077.6,503.0 1077.6,503.0"/><path d="M1079.6,519.3 L1093.0,519.3"/><path d="M1008.2,276.0 C1008.2,276.0 1016.2,281.5 1019.1,283.4 C1021.0,284.7 1024.8,286.5 1026.4,288.2 C1028.5,290.4 1029.9,296.4 1032.5,298.0 C1035.0,299.6 1042.0,301.7 1043.5,299.2 C1046.4,294.6 1044.4,284.0 1044.7,278.5 C1044.7,277.8 1044.7,276.0 1044.7,276.0"/><path d="M1026.4,276.0 C1026.4,276.0 1033.2,281.4 1036.2,282.2 C1037.3,282.5 1039.2,280.7 1039.8,279.7 C1040.3,278.9 1040.0,276.0 1040.0,276.0"/><path d="M1068.6,500.3 C1072.5,499.5 1077.3,502.0 1079.6,505.2 C1081.9,508.5 1081.0,513.3 1080.8,517.3 C1080.6,520.6 1081.0,525.1 1078.3,527.0 C1075.4,529.1 1070.6,528.6 1067.4,527.0 C1063.6,525.1 1060.5,521.2 1058.9,517.3 C1057.8,514.7 1058.6,511.4 1060.0,509.0 C1062.0,505.5 1064.6,501.1 1068.6,500.3Z"/><path d="M1001.7,568.5 C1004.0,562.1 1011.0,558.2 1016.3,553.9 C1019.1,551.7 1022.6,547.9 1026.0,549.0 C1031.4,550.8 1036.7,555.7 1038.2,561.2 C1039.5,566.1 1036.9,572.2 1033.3,575.8 C1030.4,578.7 1024.6,576.0 1021.2,578.2 C1018.5,579.9 1019.4,585.9 1016.3,586.7 C1012.8,587.6 1008.8,584.6 1006.5,581.8 C1003.6,578.2 1000.2,572.9 1001.7,568.5Z"/></g><circle cx="1017" cy="504" r="8" fill="#c4ebc9"/><circle cx="1017" cy="504" r="2.6" fill="#2cb552"/><g fill="#6890c4"><path d="M904.2,602.5 Q901.1,595.3 895.8,594.3 Q896.9,599.6 904.2,602.5Z"/><path d="M904.2,602.5 Q911.5,599.6 912.5,594.3 Q907.2,595.3 904.2,602.5Z"/><path d="M904.2,602.5 Q896.8,599.9 892.2,602.3 Q896.7,604.9 904.2,602.5Z"/><path d="M904.2,602.5 Q911.7,604.9 916.2,602.3 Q911.6,599.9 904.2,602.5Z"/><path d="M904.2,602.5 Q896.7,605.6 895.4,611.0 Q900.8,609.9 904.2,602.5Z"/><path d="M904.2,602.5 Q907.5,609.9 912.9,611.0 Q911.7,605.6 904.2,602.5Z"/><path d="M903.2,602.5 L905.4,602.5 L905.5,628.5 L903.1,628.5Z"/><path d="M900.3,631.3 Q907,624.5 913.5,631.3Z" fill="#9db6d6"/><path d="M889.5,628 Q895,621.5 900.8,628Z" fill="#9db6d6"/></g></svg><div class="abs" style="left:464.3px;top:7.5px;width:18.4px;height:18.2px;border-radius:4px;background:#fff"></div><svg class="abs" style="left:467.5px;top:10.5px" width="12" height="12" viewBox="0 0 12 12"><path d="M3 8.5V5.5a3 3 0 0 1 6 0v3l1 1H2z M5 10.3a1 1 0 0 0 2 0" fill="none" stroke="#333" stroke-width="0.75" stroke-linejoin="round"/></svg><div class="abs" style="left:451.5px;top:373.3px;width:31.2px;height:16px;border-radius:4px;background:#fff"></div><svg class="abs" style="left:451.5px;top:373.3px" width="32" height="16" viewBox="0 0 32 16"><path d="M4.2 8h7.6M19.3 8h7.6M23.1 4.2v7.6" stroke="#666" stroke-width="0.85"/></svg></div>
</body></html>
